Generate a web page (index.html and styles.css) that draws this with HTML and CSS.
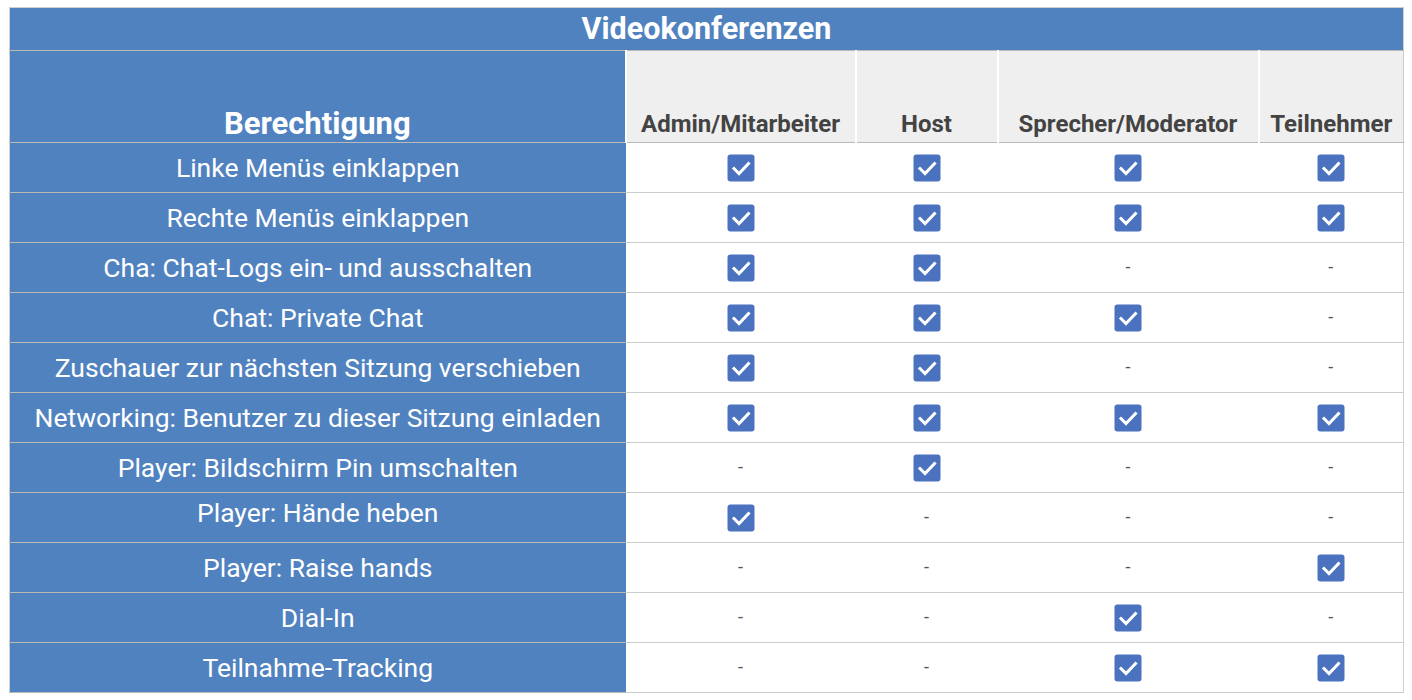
FILE: index.html
```html
<!DOCTYPE html>
<html>
<head>
<meta charset="utf-8">
<link rel="stylesheet" href="styles.css">
</head>
<body>
<table class="perm">
  <colgroup>
    <col class="c-label"><col class="c-admin"><col class="c-host"><col class="c-speaker"><col class="c-part">
  </colgroup>
  <thead>
    <tr><th class="title" colspan="5">Videokonferenzen</th></tr>
    <tr class="head">
      <th class="label-head">Berechtigung</th>
      <th class="role">Admin/Mitarbeiter</th>
      <th class="role">Host</th>
      <th class="role">Sprecher/Moderator</th>
      <th class="role">Teilnehmer</th>
    </tr>
  </thead>
  <tbody id="rows"></tbody>
</table>
<script>
const data = [
  ["Linke Menüs einklappen",1,1,1,1],
  ["Rechte Menüs einklappen",1,1,1,1],
  ["Cha: Chat-Logs ein- und ausschalten",1,1,0,0],
  ["Chat: Private Chat",1,1,1,0],
  ["Zuschauer zur nächsten Sitzung verschieben",1,1,0,0],
  ["Networking: Benutzer zu dieser Sitzung einladen",1,1,1,1],
  ["Player: Bildschirm Pin umschalten",0,1,0,0],
  ["Player: Hände heben",1,0,0,0,"raised"],
  ["Player: Raise hands",0,0,0,1],
  ["Dial-In",0,0,1,0],
  ["Teilnahme-Tracking",0,0,1,1]
];
const box = '<svg class="box" width="28" height="28" viewBox="0 0 28 28"><rect x="0.5" y="0.5" width="27" height="27" rx="3" fill="#4a72bf"/><path d="M7 14.5l5 5L21.5 9.5" fill="none" stroke="#fff" stroke-width="3" stroke-linecap="square"/></svg>';
const tb = document.getElementById('rows');
data.forEach(r => {
  const tr = document.createElement('tr');
  let h = '<td class="label' + (r[5] ? ' ' + r[5] : '') + '">' + r[0] + '</td>';
  for (let i = 1; i <= 4; i++) h += '<td class="cell">' + (r[i] ? box : '<span class="dash">-</span>') + '</td>';
  tr.innerHTML = h;
  tb.appendChild(tr);
});
</script>
</body>
</html>
```

FILE: styles.css
```css
html, body {
  margin: 0;
  background: #fff;
}
body {
  padding: 7px 0 0 9px;
  font-family: Roboto, "Liberation Sans", sans-serif;
}
.perm {
  border-collapse: collapse;
  table-layout: fixed;
  width: 1394px;
  border: 1px solid #cfcfcf;
}
.c-label { width: 616px; }
.c-admin { width: 230px; }
.c-host { width: 142px; }
.c-speaker { width: 261px; }
.c-part { width: 145px; }

.title {
  height: 42px;
  padding: 0;
  background: #5182c0;
  color: #fff;
  font-size: 30.5px;
  line-height: 36px;
  font-weight: 700;
  text-align: center;
  vertical-align: middle;
  border-bottom: 1px solid #b9b9b9;
}
.head th {
  height: 88px;
  padding: 0 0 3px;
  line-height: 30px;
  vertical-align: bottom;
  text-align: center;
  border-bottom: 1px solid #b9b9b9;
}
.label-head {
  background: #5182c0;
  color: #fff;
  font-size: 31px;
  font-weight: 700;
}
.role {
  background: #efefef;
  color: #434343;
  font-size: 24px;
  font-weight: 700;
  border-left: 2px solid #fff;
}
tbody td {
  height: 49px;
  padding: 0;
  text-align: center;
  vertical-align: middle;
  border-bottom: 1px solid #cccccc;
  line-height: 30px;
}
.label {
  background: #5182c0;
  color: #fff;
  font-size: 26.5px;
  border-bottom-color: #b9b9b9;
}
.label.raised {
  height: 39px;
  padding-bottom: 10px;
}
.cell {
  background: #fff;
}
.box {
  display: block;
  margin: 1px auto 0;
}
.dash {
  color: #555;
  font-size: 18px;
}
```
